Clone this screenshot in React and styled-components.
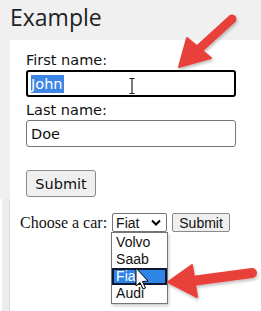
import styled, { createGlobalStyle } from "styled-components";

const GlobalStyle = createGlobalStyle`
  html, body {
    margin: 0;
    padding: 0;
    background: #ffffff;
  }
`;

const cars = ["Volvo", "Saab", "Fiat", "Audi"];

const App = () => {
  return (
    <Page>
      <GlobalStyle />
      <TopSection>
        <Title>Example</Title>
        <Card>
          <Label>First name:</Label>
          <TextBox focused>
            <Selected>John</Selected>
          </TextBox>
          <Label>Last name:</Label>
          <TextBox>Doe</TextBox>
          <FormButton>Submit</FormButton>
        </Card>
      </TopSection>

      <BottomSection>
        <Strip />
        <CarForm>
          <CarLabel>Choose a car:</CarLabel>
          <SelectWrap>
            <SelectBox>
              <span>Fiat</span>
              <svg width="10" height="7" viewBox="0 0 10 7">
                <path d="M1 1.5L5 5.5L9 1.5" stroke="#000" strokeWidth="2" fill="none" />
              </svg>
            </SelectBox>
            <OptionList>
              {cars.map((car) => (
                <Option key={car} active={car === "Fiat"}>
                  {car}
                </Option>
              ))}
            </OptionList>
          </SelectWrap>
          <SmallButton>Submit</SmallButton>
        </CarForm>
      </BottomSection>

      {/* 텍스트 커서 */}
      <Overlay width="261" height="311" viewBox="0 0 261 311">
        <defs>
          <filter id="shadow" x="-20%" y="-20%" width="140%" height="140%">
            <feDropShadow dx="1" dy="2" stdDeviation="1.5" floodColor="#000" floodOpacity="0.25" />
          </filter>
        </defs>
        <path
          d="M129.5 78.5h5M132 78.5v15M129.5 93.5h5"
          stroke="#222"
          strokeWidth="1.2"
          fill="none"
        />
        {/* 마우스 포인터 */}
        <path
          d="M136 268 L136 286 L140 282.5 L143 289 L145.5 288 L142.5 281.5 L148 281 Z"
          fill="#fff"
          stroke="#000"
          strokeWidth="1"
        />
        {/* 빨간 화살표 */}
        <g fill="#e8413a" stroke="#e8413a" strokeLinejoin="round" filter="url(#shadow)">
          <line x1="232" y1="19" x2="199" y2="49" strokeWidth="9" strokeLinecap="round" />
          <polygon points="179,67 187,38 211,58" strokeWidth="2" />
          <line x1="252" y1="273" x2="192" y2="281" strokeWidth="10" strokeLinecap="round" />
          <polygon points="168,282 192,265 197,297" strokeWidth="2" />
        </g>
      </Overlay>
    </Page>
  );
};

export default App;

const Page = styled.div`
  position: relative;
  width: 261px;
  height: 311px;
  overflow: hidden;
  background: #ffffff;
`;

const TopSection = styled.div`
  background: #f0f0f0;
  padding-left: 10px;
`;

const Title = styled.div`
  height: 40px;
  font-family: "Open Sans", sans-serif;
  font-size: 23px;
  line-height: 34px;
  color: #222;
`;

const Card = styled.div`
  background: #ffffff;
  height: 159px;
  padding: 10px 0 0 16px;
  box-sizing: border-box;
  display: flex;
  flex-direction: column;
  align-items: flex-start;
`;

const Label = styled.div`
  font-family: "DejaVu Sans", sans-serif;
  font-size: 14.5px;
  line-height: 20px;
  color: #111;
`;

const TextBox = styled.div`
  box-sizing: border-box;
  width: 210px;
  height: 27px;
  margin-bottom: 3px;
  padding-left: ${(props) => (props.focused ? "3px" : "4px")};
  border: ${(props) => (props.focused ? "2px solid #000" : "1px solid #767676")};
  border-radius: 3px;
  display: flex;
  align-items: center;
  font-family: "DejaVu Sans", sans-serif;
  font-size: 14.5px;
  color: #111;
`;

const Selected = styled.span`
  background: #3d86e6;
  color: #ffffff;
  line-height: 18px;
  padding-right: 1px;
`;

const FormButton = styled.div`
  margin-top: 20px;
  box-sizing: border-box;
  width: 70px;
  height: 27px;
  border: 1px solid #8a8a8a;
  border-radius: 3px;
  background: #efefef;
  display: flex;
  align-items: center;
  justify-content: center;
  font-family: "DejaVu Sans", sans-serif;
  font-size: 14.5px;
  color: #111;
`;

const BottomSection = styled.div`
  display: flex;
  height: 112px;
`;

const Strip = styled.div`
  width: 7px;
  margin-left: 2px;
  background: #ececec;
  border-right: 1px solid #dcdcdc;
`;

const CarForm = styled.div`
  display: flex;
  align-items: flex-start;
  padding: 14px 0 0 10px;
  height: 20px;
`;

const CarLabel = styled.div`
  font-family: "Liberation Serif", serif;
  font-size: 16px;
  line-height: 20px;
  color: #111;
  margin-right: 5px;
`;

const SelectWrap = styled.div`
  position: relative;
`;

const SelectBox = styled.div`
  box-sizing: border-box;
  width: 55px;
  height: 19px;
  border: 1px solid #767676;
  border-radius: 2px;
  display: flex;
  align-items: center;
  justify-content: space-between;
  padding: 0 5px 0 3px;
  font-family: "Liberation Sans", sans-serif;
  font-size: 14px;
  color: #111;
`;

const OptionList = styled.div`
  position: absolute;
  top: 19px;
  left: -1px;
  box-sizing: border-box;
  width: 57px;
  padding: 1px 0;
  background: #ffffff;
  border: 1px solid #767676;
  box-shadow: 1px 2px 3px rgba(0, 0, 0, 0.2);
`;

const Option = styled.div`
  box-sizing: border-box;
  height: 17px;
  padding-left: ${(props) => (props.active ? "2px" : "4px")};
  font-family: "Liberation Sans", sans-serif;
  font-size: 14px;
  line-height: ${(props) => (props.active ? "13px" : "17px")};
  color: ${(props) => (props.active ? "#ffffff" : "#111")};
  background: ${(props) => (props.active ? "#2f84e8" : "transparent")};
  border: ${(props) => (props.active ? "2px solid #0c1830" : "none")};
`;

const SmallButton = styled.div`
  box-sizing: border-box;
  margin-left: 5px;
  width: 58px;
  height: 19px;
  border: 1px solid #8a8a8a;
  border-radius: 2px;
  background: #efefef;
  display: flex;
  align-items: center;
  justify-content: center;
  font-family: "Liberation Sans", sans-serif;
  font-size: 14px;
  color: #111;
`;

const Overlay = styled.svg`
  position: absolute;
  left: 0;
  top: 0;
  pointer-events: none;
`;
